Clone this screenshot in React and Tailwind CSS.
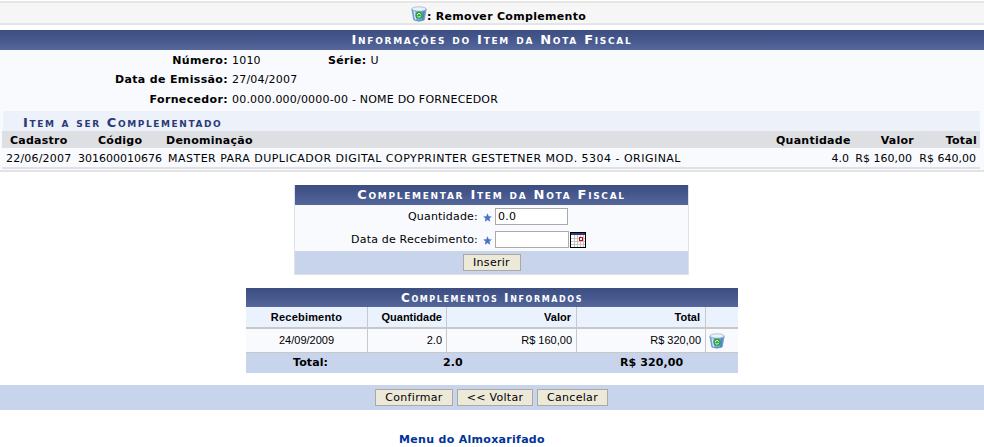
const verdana = '[font-family:"DejaVu_Sans",Verdana,sans-serif]';

const TrashIcon = ({ className }) => (
    <svg className={className} viewBox="0 0 16 16">
        <path d="M0.8 3 L15.2 3 L13.2 14 Q8 16.4 2.8 14 Z" fill="#6fa6de" stroke="#4f7fb0" strokeWidth="0.6" />
        <ellipse cx="8" cy="3" rx="7.2" ry="2.2" fill="#eaf2f8" stroke="#7fa3c4" strokeWidth="0.6" />
        <path d="M2.4 5 L3.8 13.4 L5.4 14.2 L4.4 5.6 Z" fill="#cfe2f4" />
        <path d="M11.8 5.6 L11 14.3 L12.6 13.6 L13.8 5 Z" fill="#4f86bd" />
        <circle cx="8" cy="9.2" r="3.6" fill="#2ba338" />
        <path d="M6.3 9.2 A1.8 1.8 0 0 1 9.8 8.7 M9.7 9.7 A1.8 1.8 0 0 1 6.4 10.2" stroke="#fff" strokeWidth="1" fill="none" />
    </svg>
);

const CalendarIcon = () => (
    <svg className="ml-px w-4 h-4" viewBox="0 0 16 16" shapeRendering="crispEdges">
        <rect x="0" y="0" width="16" height="16" fill="#000" />
        <rect x="1" y="1" width="14" height="2" fill="#2a3f7a" />
        <rect x="1" y="3" width="14" height="12" fill="#fff" />
        <path d="M4.5 3V15M7.5 3V15M10.5 3V15M13.5 3V15M1 6.5H15M1 9.5H15M1 12.5H15" stroke="#c4c4c4" strokeWidth="1" />
        <rect x="9.5" y="5.5" width="3" height="3" fill="#fff" stroke="#e00000" strokeWidth="1" />
    </svg>
);

const Star = () => (
    <svg className="w-[9px] h-[9px] shrink-0" viewBox="0 0 10 10">
        <path d="M5 0.3 L6.4 3.5 L9.8 3.8 L7.2 6 L8 9.6 L5 7.7 L2 9.6 L2.8 6 L0.2 3.8 L3.6 3.5 Z" fill="#4a74c4" />
    </svg>
);

const Band = ({ children }) => (
    <div className="h-5 flex items-center justify-center bg-gradient-to-b from-[#3c4d80] via-[#46588e] to-[#56689a] text-white text-[13px] font-bold tracking-[1.7px] [font-variant:small-caps]">
        {children}
    </div>
);

const Btn = ({ children, className }) => (
    <button className={`h-[17px] bg-[#ece9d8] border border-[#aaa9a3] text-[11px] leading-none tracking-[0.3px] text-black ${className}`}>
        {children}
    </button>
);

const App = () => {
    return (
        <div className={`w-[984px] h-[447px] overflow-hidden bg-white text-[11px] text-black ${verdana}`}>
            <div className="mt-[1px] h-[24px] flex items-center justify-center pl-[13px] bg-[#f6f6f6] border-y-2 border-[#e6e6e6] text-[11px] font-bold tracking-[0.3px]">
                <TrashIcon className="w-4 h-4 mt-[2px]" />
                <span className="mt-[8px]">: Remover Complemento</span>
            </div>

            <div className="mt-[5px]">
                <Band>Informações do Item da Nota Fiscal</Band>
                <div className="h-[122px] bg-[#f9fafe] border-b-2 border-[#e3e3e3] pt-[1px]">
                    <div className="grid grid-cols-[228px_92px_auto_1fr] gap-x-1 tracking-[0.2px]">
                        <div className="h-[19px] pt-[2px] flex items-center justify-end font-bold tracking-[0.35px]">Número:</div>
                        <div className="h-[19px] pt-[2px] flex items-center">1010</div>
                        <div className="h-[19px] pt-[2px] flex items-center font-bold tracking-[0.35px]">Série:</div>
                        <div className="h-[19px] pt-[2px] flex items-center">U</div>
                        <div className="h-5 flex items-center justify-end font-bold tracking-[0.35px]">Data de Emissão:</div>
                        <div className="h-5 flex items-center col-span-3">27/04/2007</div>
                        <div className="h-5 flex items-center justify-end font-bold tracking-[0.35px]">Fornecedor:</div>
                        <div className="h-5 flex items-center col-span-3">00.000.000/0000-00 - NOME DO FORNECEDOR</div>
                    </div>
                    <div className="mt-[1px] ml-[3px] mr-[4px] h-5 pt-[4px] flex items-center pl-5 bg-[#edf1f9] text-[#2b3a77] text-[13px] font-bold tracking-[1.6px] [font-variant:small-caps]">
                        Item a ser Complementado
                    </div>
                    <div className="ml-[2px] mr-[4px] border-b-2 border-[#dfe1e6]">
                        <div className="h-[17px] pt-[4px] flex items-center bg-[#dedfe3] font-bold tracking-[0.25px]">
                            <span className="ml-2 w-[88px]">Cadastro</span>
                            <span className="w-[68px]">Código</span>
                            <span className="flex-1">Denominação</span>
                            <span className="w-[73px]">Quantidade</span>
                            <span className="w-[65px] text-right">Valor</span>
                            <span className="w-[66px] text-right pr-[3px]">Total</span>
                        </div>
                        <div className="h-[19px] pt-[4px] flex items-center whitespace-nowrap">
                            <span className="ml-1 w-[72px] tracking-[0.2px]">22/06/2007</span>
                            <span className="w-[90px]">301600010676</span>
                            <span className="flex-1 tracking-[0.48px]">MASTER PARA DUPLICADOR DIGITAL COPYPRINTER GESTETNER MOD. 5304 - ORIGINAL</span>
                            <span className="w-8 text-right">4.0</span>
                            <span className="w-[63px] text-right">R$ 160,00</span>
                            <span className="w-[68px] text-right pr-[4px]">R$ 640,00</span>
                        </div>
                    </div>
                </div>
            </div>

            <div className="mt-[13px] ml-[294px] w-[395px] border-x border-b border-[#dfe1e6]">
                <Band>Complementar Item da Nota Fiscal</Band>
                <div className="bg-[#f9fafe] pt-[2px] tracking-[0.2px]">
                    <div className="grid grid-cols-[197px_auto] gap-x-[3px] gap-y-[6px] items-center pt-[1px] pb-[3px]">
                        <div className="h-[17px] flex items-center justify-end gap-[5px] pt-[2px]">
                            <span>Quantidade:</span>
                            <Star />
                        </div>
                        <input readOnly value="0.0" className="w-[73px] h-[17px] bg-white border border-[#aaa] px-[2px] text-[11px] outline-none" />
                        <div className="h-[17px] flex items-center justify-end gap-[5px] pt-[2px]">
                            <span>Data de Recebimento:</span>
                            <Star />
                        </div>
                        <div className="flex items-center">
                            <input readOnly value="" className="w-[74px] h-[17px] bg-white border border-[#aaa] px-[2px] text-[11px] outline-none" />
                            <CalendarIcon />
                        </div>
                    </div>
                </div>
                <div className="h-[23px] flex items-center justify-center bg-[#c8d4ec]">
                    <Btn className="w-[58px]">Inserir</Btn>
                </div>
            </div>

            <div className="mt-[13px] mx-auto w-[492px]">
                <div className="h-[19px] flex items-center justify-center bg-gradient-to-b from-[#3c4d80] via-[#46588e] to-[#56689a] text-white text-[12px] font-bold tracking-[1.6px] [font-variant:small-caps]">
                    Complementos Informados
                </div>
                <div className="grid grid-cols-[122px_79px_130px_129px_32px] font-['Liberation_Sans',Arial,sans-serif]">
                    <div className="h-[22px] flex items-center justify-center bg-[#eaf2fd] border-r border-b-2 border-[#c8c8c8] font-bold tracking-[0.2px]">Recebimento</div>
                    <div className="h-[22px] flex items-center justify-end pr-[4px] bg-[#eaf2fd] border-r border-b-2 border-[#c8c8c8] font-bold">Quantidade</div>
                    <div className="h-[22px] flex items-center justify-end pr-[5px] bg-[#eaf2fd] border-r border-b-2 border-[#c8c8c8] font-bold">Valor</div>
                    <div className="h-[22px] flex items-center justify-end pr-[5px] bg-[#eaf2fd] border-r border-b-2 border-[#c8c8c8] font-bold">Total</div>
                    <div className="h-[22px] bg-[#eaf2fd] border-b-2 border-[#c8c8c8]" />
                    <div className="h-[24px] flex items-center justify-center bg-[#f9fafe] border-r border-b border-[#c8c8c8]">24/09/2009</div>
                    <div className="h-[24px] flex items-center justify-end pr-[4px] bg-[#f9fafe] border-r border-b border-[#c8c8c8]">2.0</div>
                    <div className="h-[24px] flex items-center justify-end pr-[4px] bg-[#f9fafe] border-r border-b border-[#c8c8c8]">R$ 160,00</div>
                    <div className="h-[24px] flex items-center justify-end pr-[4px] bg-[#f9fafe] border-r border-b border-[#c8c8c8]">R$ 320,00</div>
                    <div className="h-[24px] flex items-center pl-[3px] bg-[#f9fafe] border-b border-[#c8c8c8]">
                        <TrashIcon className="w-4 h-4" />
                    </div>
                </div>
                <div className={`h-5 grid grid-cols-[122px_79px_130px_129px_32px] items-center bg-[#c8d4ec] font-bold tracking-[0.1px] whitespace-nowrap ${verdana}`}>
                    <span className="ml-[47px]">Total:</span>
                    <span className="ml-[75px]">2.0</span>
                    <span />
                    <span className="ml-[43px]">R$ 320,00</span>
                    <span />
                </div>
            </div>

            <div className="mt-[12px] h-[25px] flex items-center bg-[#c8d4ec] pl-[375px] gap-[4px]">
                <Btn className="w-[78px]">Confirmar</Btn>
                <Btn className="w-[76px]">&lt;&lt; Voltar</Btn>
                <Btn className="w-[71px]">Cancelar</Btn>
            </div>

            <div className="mt-[22px] w-[944px] text-center">
                <a className="text-[#003399] font-bold tracking-[0.3px]">Menu do Almoxarifado</a>
            </div>
        </div>
    );
};

export default App;
